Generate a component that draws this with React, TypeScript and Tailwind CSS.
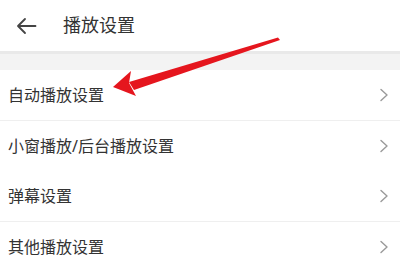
import React from "react";

const rows = [
  { label: "自动播放设置", divider: true },
  { label: "小窗播放/后台播放设置", divider: false },
  { label: "弹幕设置", divider: true },
  { label: "其他播放设置", divider: false },
];

function Chevron() {
  return (
    <svg width="10" height="14" viewBox="0 0 10 14" fill="none">
      <path d="M2 1.5 L8 7 L2 12.5" stroke="#9a9a9a" strokeWidth="1.4" strokeLinecap="round" strokeLinejoin="round" />
    </svg>
  );
}

export default function App() {
  return (
    <div
      className="relative w-[400px] h-[264px] overflow-hidden bg-white text-[#333333]"
      style={{ fontFamily: '"Noto Sans", "Noto Sans CJK SC", sans-serif' }}
    >
      <div className="h-[51px] flex items-center">
        <div className="w-[63px] flex items-center pl-[16px]">
          <svg width="21" height="18" viewBox="0 0 21 18" fill="none">
            <path d="M19.5 9 H2.5 M9 2 L2 9 L9 16" stroke="#444444" strokeWidth="1.8" strokeLinecap="round" strokeLinejoin="round" />
          </svg>
        </div>
        <div className="text-[18px] leading-none text-[#333333] mt-[-2px]">播放设置</div>
      </div>
      <div className="h-[19px] bg-[#f3f3f3] border-t-[3px] border-[#e9e9e9]" />
      <div className="flex flex-col">
        {rows.map((r, i) => (
          <div key={i} className={r.divider ? "border-b border-[#efefef]" : ""}>
            <div className="h-[50px] flex items-center justify-between pl-[8px] pr-[11px]">
              <span className="text-[16px] leading-none">{r.label}</span>
              <Chevron />
            </div>
          </div>
        ))}
      </div>
      <svg className="absolute left-0 top-0 pointer-events-none" width="400" height="264" viewBox="0 0 400 264">
        <path d="M278 37.5 L280 40 L134 90 L129 82 Z" fill="#e5161e" />
        <path d="M113 87 L131 71 L129 83 L136 96 Z" fill="#e5161e" />
      </svg>
    </div>
  );
}
